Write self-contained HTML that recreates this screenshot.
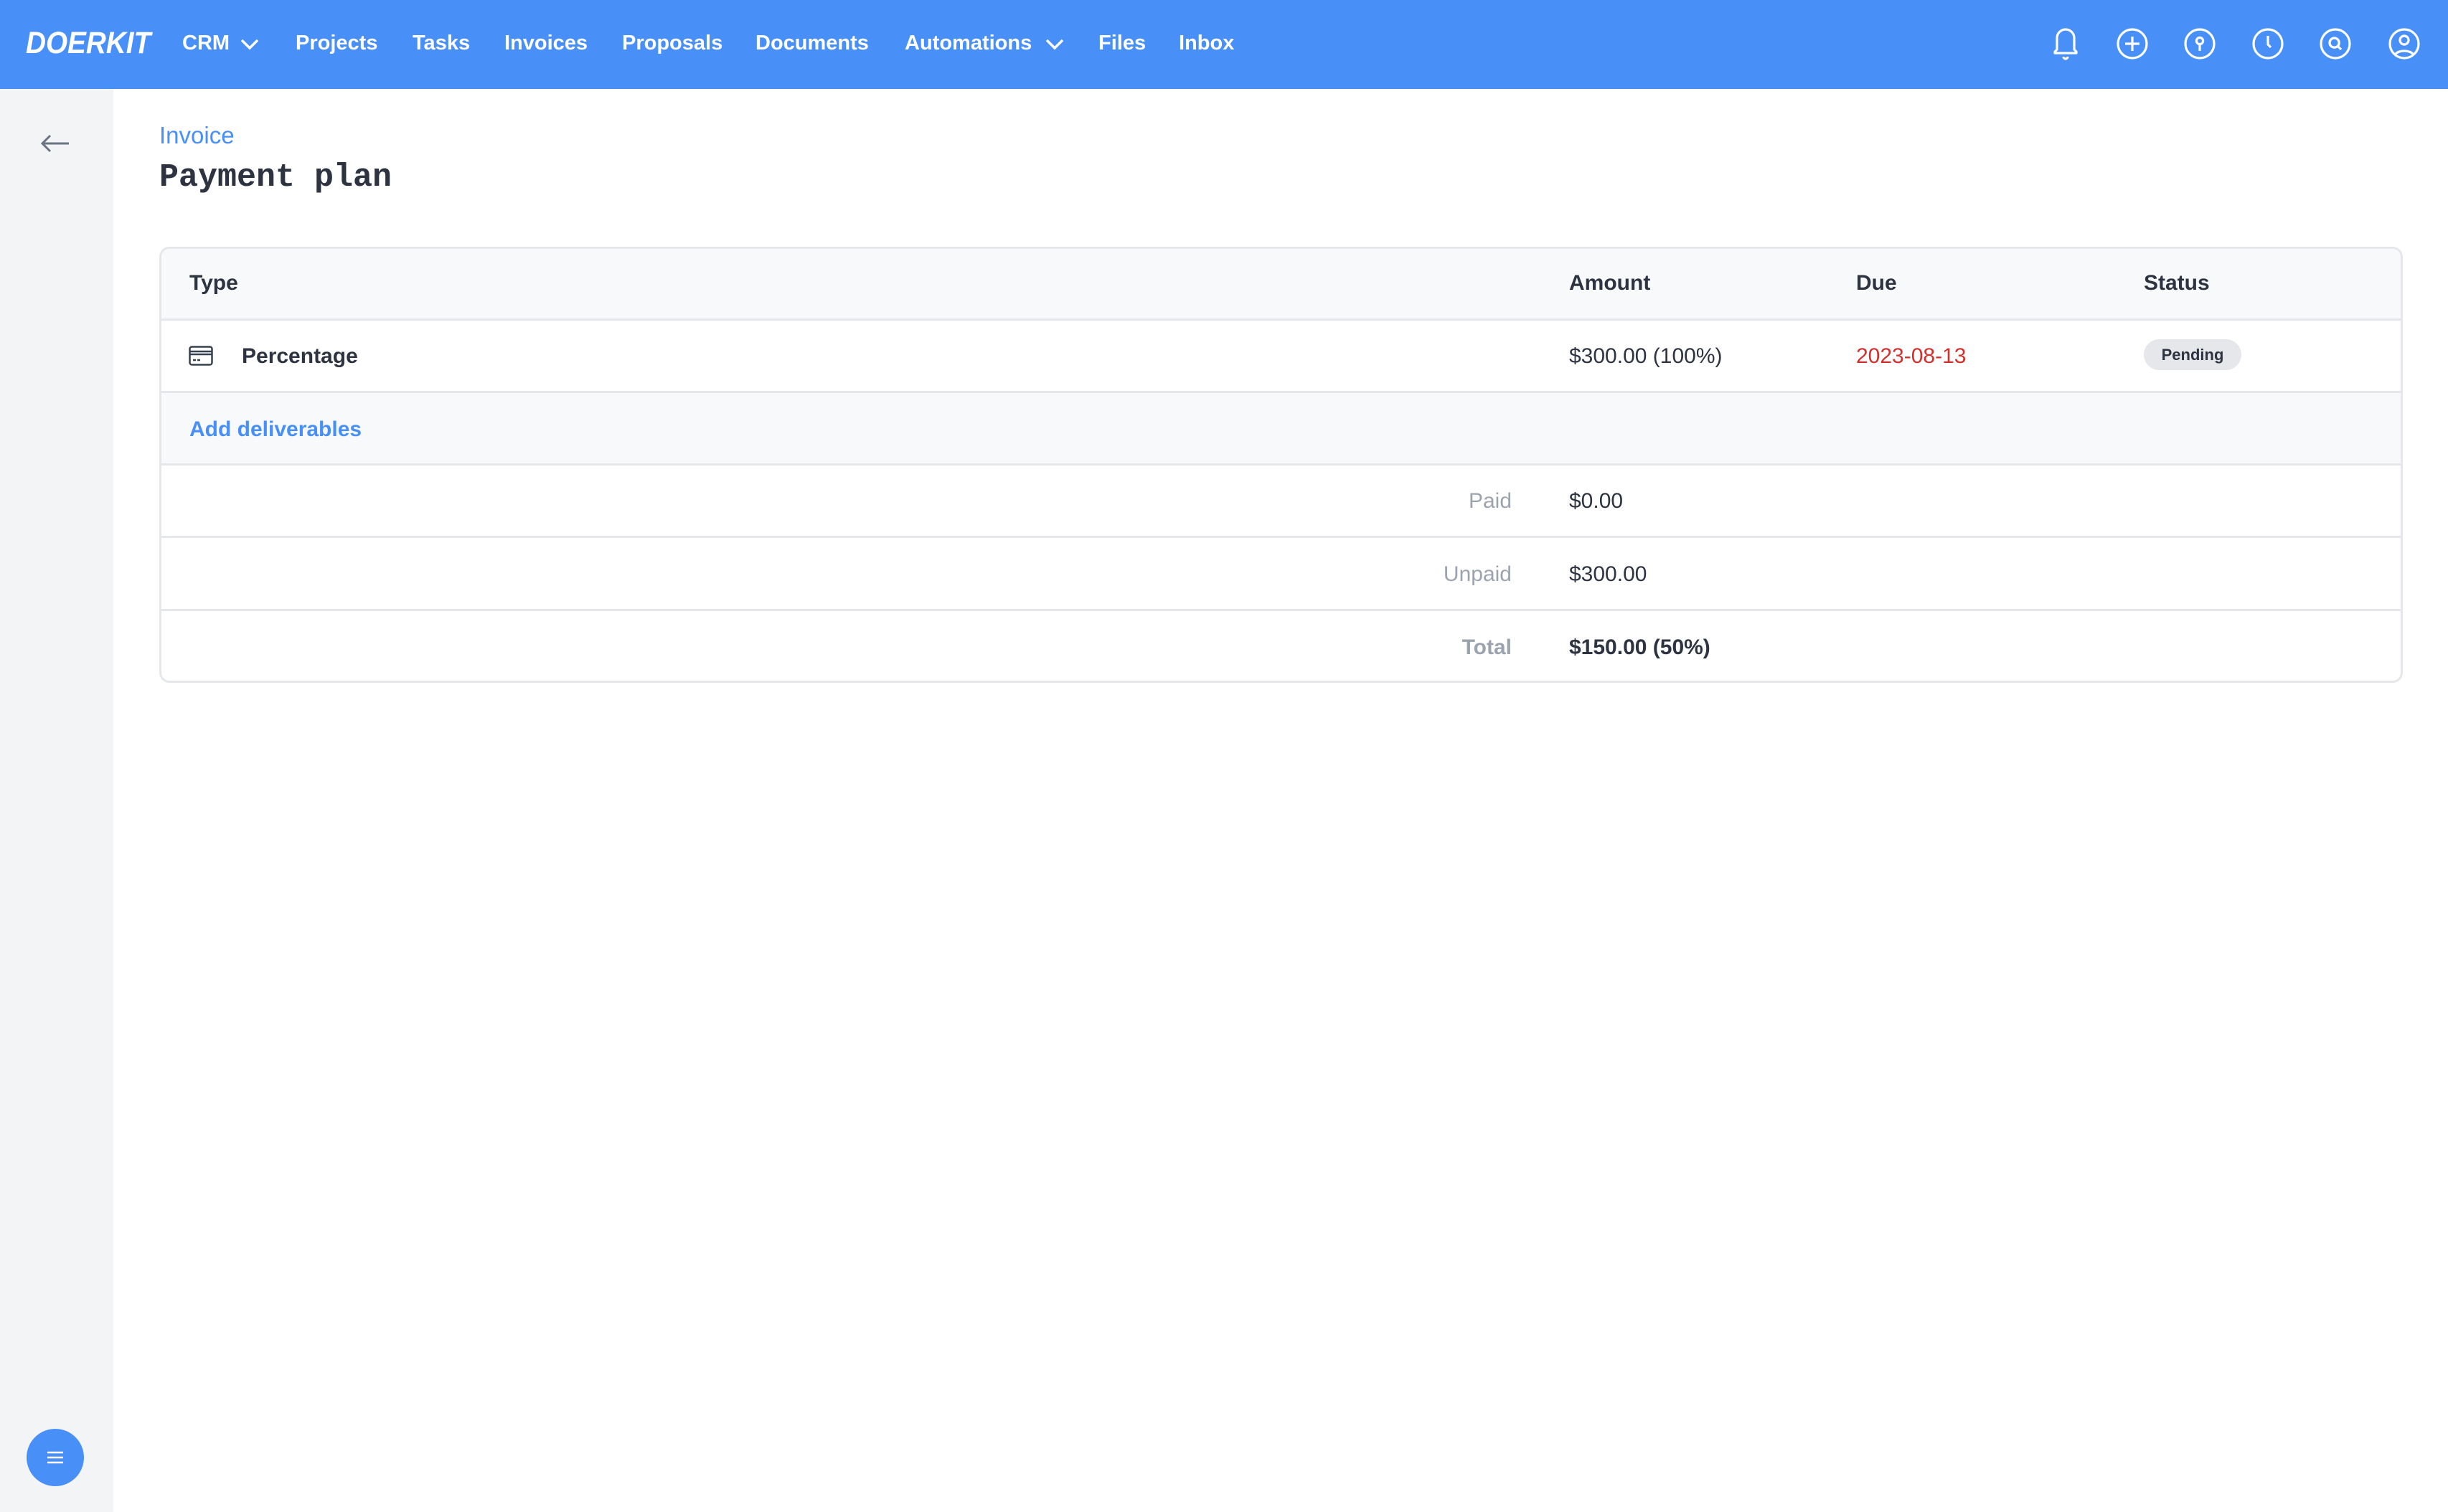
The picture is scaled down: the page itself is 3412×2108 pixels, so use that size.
<!DOCTYPE html>
<html><head><meta charset="utf-8"><style>
*{margin:0;padding:0;box-sizing:border-box}
body{width:3412px;height:2108px;overflow:hidden;background:#fff;font-family:"Liberation Sans",sans-serif;position:relative;color:#2d3340}
.nav{position:absolute;left:0;top:0;width:3412px;height:124px;background:#4890f8}
.logo{position:absolute;left:36px;top:36px;font-size:43px;font-weight:bold;font-style:italic;color:#fff;transform:scaleX(0.9);transform-origin:left top}
.nl{position:absolute;top:44px;font-size:29px;font-weight:bold;color:#fff}
.ic{position:absolute;top:37px;width:48px;height:48px}
.side{position:absolute;left:0;top:124px;width:158px;height:1984px;background:#f3f4f6}
.t{position:absolute;font-size:30px}
.row{position:absolute;left:222px;width:3127px;border-top:3px solid #e5e7eb}
</style></head><body>
<div class="nav">
<div class="logo">DOERKIT</div>
<div class="nl" style="left:254px">CRM</div>
<svg style="position:absolute;left:334px;top:52px" width="28" height="20" viewBox="0 0 28 20"><path d="M3 4l11 11 11-11" fill="none" stroke="#fff" stroke-width="3.5"/></svg>
<div class="nl" style="left:412px">Projects</div>
<div class="nl" style="left:575px">Tasks</div>
<div class="nl" style="left:703px">Invoices</div>
<div class="nl" style="left:867px">Proposals</div>
<div class="nl" style="left:1053px">Documents</div>
<div class="nl" style="left:1261px">Automations</div>
<svg style="position:absolute;left:1456px;top:52px" width="28" height="20" viewBox="0 0 28 20"><path d="M3 4l11 11 11-11" fill="none" stroke="#fff" stroke-width="3.5"/></svg>
<div class="nl" style="left:1531px">Files</div>
<div class="nl" style="left:1643px">Inbox</div>
<svg class="ic" style="left:2855px" viewBox="0 0 24 24" fill="none" stroke="#fff" stroke-width="1.6"><path d="M6 16V8a6 6 0 0112 0v8l1.5 1.5v1H4.5v-1z" stroke-linejoin="round"/><path d="M10.5 21a1.5 1.5 0 003 0"/></svg>
<svg class="ic" style="left:2948px" viewBox="0 0 24 24" fill="none" stroke="#fff" stroke-width="1.6"><circle cx="12" cy="12" r="10"/><path d="M12 7v10M7 12h10"/></svg>
<svg class="ic" style="left:3042px" viewBox="0 0 24 24" fill="none" stroke="#fff" stroke-width="1.6"><circle cx="12" cy="12" r="10"/><circle cx="12" cy="10" r="2.3"/><path d="M12 12.3V17"/></svg>
<svg class="ic" style="left:3137px" viewBox="0 0 24 24" fill="none" stroke="#fff" stroke-width="1.6"><circle cx="12" cy="12" r="10"/><path d="M12 6.5v6l2 2"/></svg>
<svg class="ic" style="left:3231px" viewBox="0 0 24 24" fill="none" stroke="#fff" stroke-width="1.6"><circle cx="12" cy="12" r="10"/><circle cx="11.3" cy="11.3" r="3.3"/><path d="M13.8 13.8L16 16"/></svg>
<svg class="ic" style="left:3327px" viewBox="0 0 24 24" fill="none" stroke="#fff" stroke-width="1.6"><circle cx="12" cy="12" r="10"/><circle cx="12" cy="9.5" r="3"/><path d="M5.5 19.5a7.5 5 0 0113 0"/></svg>
</div>
<div class="side"></div>
<svg style="position:absolute;left:56px;top:186px" width="42" height="28" viewBox="0 0 42 28"><path d="M40 14H4M14 3L3 14l11 11" fill="none" stroke="#6b7280" stroke-width="3"/></svg>
<div style="position:absolute;left:37px;top:1992px;width:80px;height:80px;border-radius:50%;background:#4890f8"></div>
<svg style="position:absolute;left:66px;top:2022px" width="22" height="20"><path d="M0 3h22M0 10h22M0 17h22" stroke="#fff" stroke-width="2.5"/></svg>
<div class="t" style="left:222px;top:170px;font-size:33px;color:#4890f8">Invoice</div>
<div style="position:absolute;left:222px;top:222px;font-family:'Liberation Mono',monospace;font-weight:bold;font-size:45px;color:#2d3340">Payment plan</div>
<div style="position:absolute;left:222px;top:344px;width:3127px;height:608px;border:3px solid #e5e7eb;border-radius:14px;overflow:hidden">
<div style="position:absolute;left:0;top:0;width:100%;height:101px;background:#f8f9fb"></div>
<div style="position:absolute;left:0;top:201px;width:100%;height:101px;background:#f8f9fb"></div>
</div>
<div class="row" style="top:444px"></div><div class="row" style="top:545px"></div><div class="row" style="top:646px"></div><div class="row" style="top:747px"></div><div class="row" style="top:849px"></div>
<div class="t" style="left:264px;top:378px;font-weight:bold">Type</div>
<div class="t" style="left:2187px;top:378px;font-weight:bold">Amount</div>
<div class="t" style="left:2587px;top:378px;font-weight:bold">Due</div>
<div class="t" style="left:2988px;top:378px;font-weight:bold">Status</div>
<svg style="position:absolute;left:263px;top:482px" width="34" height="28" viewBox="0 0 34 28" fill="none" stroke="#374151" stroke-width="2.5"><rect x="1.5" y="1.5" width="31" height="25" rx="3"/><path d="M1.5 8h31M1.5 12h31M6 20h4M12 20h4"/></svg>
<div class="t" style="left:337px;top:480px;font-weight:bold">Percentage</div>
<div class="t" style="left:2187px;top:480px">$300.00 (100%)</div>
<div class="t" style="left:2587px;top:480px;color:#d0312d">2023-08-13</div>
<div style="position:absolute;left:2988px;top:473px;width:136px;height:43px;border-radius:22px;background:#e5e7eb;font-size:22px;font-weight:bold;text-align:center;line-height:43px">Pending</div>
<div class="t" style="left:264px;top:582px;font-weight:bold;color:#4890f8">Add deliverables</div>
<div class="t" style="right:1305px;top:682px;color:#9ca3af">Paid</div>
<div class="t" style="left:2187px;top:682px">$0.00</div>
<div class="t" style="right:1305px;top:784px;color:#9ca3af">Unpaid</div>
<div class="t" style="left:2187px;top:784px">$300.00</div>
<div class="t" style="right:1305px;top:886px;color:#9ca3af;font-weight:bold">Total</div>
<div class="t" style="left:2187px;top:886px;font-weight:bold">$150.00 (50%)</div>
</body></html>
